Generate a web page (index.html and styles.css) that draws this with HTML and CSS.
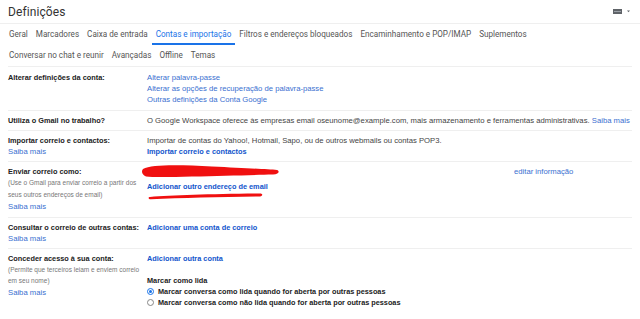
FILE: index.html
```html
<!DOCTYPE html>
<html lang="pt">
<head>
<meta charset="utf-8">
<title>Definições</title>
<link rel="stylesheet" href="styles.css">
</head>
<body>
<header class="header">
  <h1 class="title">Definições</h1>
  <div class="kbd">
    <svg width="18" height="8" viewBox="0 0 18 8"><rect x="0" y="1" width="9" height="5" fill="#5f6368"/><rect x="1" y="3" width="7" height="1" fill="#9aa0a6"/><path d="M14 2.5h3l-1.5 1.8z" fill="#5f6368"/></svg>
  </div>
</header>
<nav class="tabs">
  <span class="tab">Geral</span>
  <span class="tab">Marcadores</span>
  <span class="tab">Caixa de entrada</span>
  <span class="tab active">Contas e importação</span>
  <span class="tab">Filtros e endereços bloqueados</span>
  <span class="tab">Encaminhamento e POP/IMAP</span>
  <span class="tab">Suplementos</span>
  <span class="break"></span>
  <span class="tab">Conversar no chat e reunir</span>
  <span class="tab">Avançadas</span>
  <span class="tab">Offline</span>
  <span class="tab">Temas</span>
</nav>
<main class="settings">
  <section class="row r1">
    <div class="label"><b>Alterar definições da conta:</b></div>
    <div class="value">
      <a class="link">Alterar palavra-passe</a>
      <a class="link">Alterar as opções de recuperação de palavra-passe</a>
      <a class="link">Outras definições da Conta Google</a>
    </div>
  </section>
  <section class="row">
    <div class="label"><b>Utiliza o Gmail no trabalho?</b></div>
    <div class="value"><span class="text nowrap">O Google Workspace oferece às empresas email oseunome@example.com, mais armazenamento e ferramentas administrativas. <a class="link inline">Saiba mais</a></span></div>
  </section>
  <section class="row">
    <div class="label"><b>Importar correio e contactos:</b><a class="link">Saiba mais</a></div>
    <div class="value">
      <span class="text">Importar de contas do Yahoo!, Hotmail, Sapo, ou de outros webmails ou contas POP3.</span>
      <a class="link strong">Importar correio e contactos</a>
    </div>
  </section>
  <section class="row r4">
    <div class="label"><b>Enviar correio como:</b><span class="note">(Use o Gmail para enviar correio a partir dos<br>seus outros endereços de email)</span><a class="link more">Saiba mais</a></div>
    <div class="value send">
      <div class="send-main">
        <div class="hidden-line"></div>
        <a class="link strong add">Adicionar outro endereço de email</a>
        <svg class="scribble" width="150" height="40" viewBox="0 0 150 40">
          <path d="M1 6 C 10 1, 40 2, 70 3.5 C 100 5, 125 6, 135 7 C 138 8, 137 11, 131 11.5 C 110 12, 80 13, 50 13.5 C 30 14, 12 14.5, 4 13.5 C 0 12, -1 8, 1 6 Z" fill="#f01010"/>
          <path d="M8 34 C 30 32, 70 31, 118 30.5 C 121 30.5, 121 33, 118 33.5 C 80 34, 40 35, 9 36.3 C 6 36.3, 6 34, 8 34 Z" fill="#f01010"/>
        </svg>
      </div>
      <a class="link edit">editar informação</a>
    </div>
  </section>
  <section class="row">
    <div class="label"><b>Consultar o correio de outras contas:</b><a class="link">Saiba mais</a></div>
    <div class="value"><a class="link strong">Adicionar uma conta de correio</a></div>
  </section>
  <section class="row r6">
    <div class="label"><b>Conceder acesso à sua conta:</b><span class="note">(Permite que terceiros leiam e enviem correio<br>em seu nome)</span><a class="link more">Saiba mais</a></div>
    <div class="value">
      <a class="link strong">Adicionar outra conta</a>
      <b class="mark-title">Marcar como lida</b>
      <label class="radio"><span class="dot on"></span><b>Marcar conversa como lida quando for aberta por outras pessoas</b></label>
      <label class="radio"><span class="dot"></span><b>Marcar conversa como não lida quando for aberta por outras pessoas</b></label>
    </div>
  </section>
</main>
</body>
</html>
```

FILE: styles.css
```css
* { box-sizing: border-box; }
html, body { margin: 0; padding: 0; background: #fff; }
body {
  width: 640px;
  height: 319px;
  overflow: hidden;
  font-family: "Liberation Sans", Arial, sans-serif;
  font-size: 7.7px;
  color: #222;
}
.header {
  height: 24px;
  border-bottom: 1px solid #efefef;
  display: flex;
  align-items: center;
  justify-content: space-between;
  padding: 0 8px 0 8px;
}
.title {
  margin: 0;
  font-family: Roboto, "Open Sans", sans-serif;
  font-weight: 400;
  font-size: 12px;
  color: #333;
  letter-spacing: 0.1px;
}
.kbd { display: flex; align-items: center; padding-right: 1px; }
.kbd svg { display: block; }
.tabs {
  display: flex;
  flex-wrap: wrap;
  padding: 0 0 0 5px;
}
.break { flex-basis: 100%; height: 0; }
.tab {
  font-family: Roboto, "Open Sans", sans-serif;
  font-size: 8.15px;
  color: #555;
  height: 21px;
  line-height: 21px;
  padding: 0 4px;
  border-bottom: 2px solid transparent;
  white-space: nowrap;
}
.tab.active {
  color: #1a73e8;
  border-bottom-color: #1a73e8;
}
.settings { padding: 0 8px; }
.row {
  display: grid;
  grid-template-columns: 139px 1fr;
  border-top: 1px solid #efefef;
  padding: 4px 0 4px;
  line-height: 11px;
}
.row.r1 { padding: 5px 0 5px; }
.row.r4 { padding: 4px 0 5px; }
.label { display: flex; flex-direction: column; }
.label b { font-weight: 700; color: #222; font-size: 7.35px; }
.value { display: flex; flex-direction: column; }
.link { color: #3a6fd0; text-decoration: none; display: block; }
.link.inline { display: inline; }
.link.strong { color: #1155cc; font-weight: 700; font-size: 7.35px; }
.text { color: #444; }
.nowrap { white-space: nowrap; }
.note {
  font-size: 6.5px;
  color: #777;
  line-height: 11.5px;
  white-space: nowrap;
}
.more { margin-top: 0.5px; }
.send { display: grid; grid-template-columns: 367px auto; }
.send-main { position: relative; display: flex; flex-direction: column; }
.hidden-line { height: 11px; }
.add { margin-top: 4px; }
.scribble { position: absolute; left: -5px; top: -3px; }
.edit { color: #3a6fd0; }
.mark-title { margin-top: 11px; font-weight: 700; color: #222; font-size: 7.35px; }
.radio { display: flex; align-items: center; height: 11px; }
.radio b { font-weight: 700; color: #222; font-size: 7.3px; }
.dot {
  width: 7px; height: 7px;
  border-radius: 50%;
  border: 1px solid #888;
  margin: 0 4px 0 0;
  background: #fff;
  position: relative;
}
.dot.on { border-color: #1a73e8; }
.dot.on::after {
  content: "";
  position: absolute;
  left: 1px; top: 1px;
  width: 3px; height: 3px;
  border-radius: 50%;
  background: #1a73e8;
}
```
